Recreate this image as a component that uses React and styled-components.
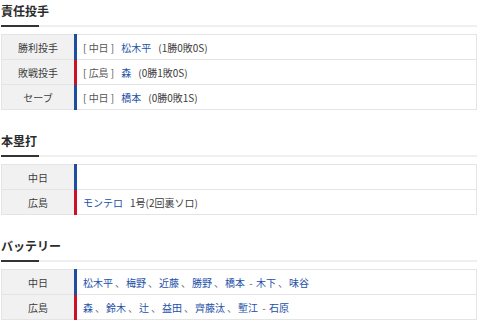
import React from 'react'
import styled, { createGlobalStyle } from 'styled-components'

const TEAM_COLOR = {
  中日: '#1d4f9e',
  広島: '#cc1126'
}

const GlobalStyle = createGlobalStyle`
  body {
    margin: 0;
    background: #fff;
    font-family: "Noto Sans CJK JP", "Noto Sans", sans-serif;
    color: #333;
  }
`

const Page = styled.div`
  padding: 0 3px 0 1px;
`

const Section = styled.section`
  margin-bottom: 20px;

  &:last-child {
    margin-bottom: 0;
  }
`

const Heading = styled.h2`
  position: relative;
  margin: 0;
  padding: 4px 0 7px;
  font-size: 12px;
  line-height: 14px;
  font-weight: bold;
  color: #2b2b2b;
  border-bottom: 2px solid #efefef;

  &::after {
    content: '';
    position: absolute;
    left: 0;
    bottom: -2px;
    width: 38px;
    height: 2px;
    background: #333;
  }
`

const Table = styled.table`
  width: 100%;
  margin-top: 7px;
  border-collapse: collapse;
  font-size: 10px;
`

const Row = styled.tr`
  height: 25px;
`

const Label = styled.th`
  width: 72px;
  padding: 0;
  font-weight: normal;
  text-align: center;
  color: #3c3c3c;
  background: #f1f1f1;
  border: 1px solid #e4e4e4;
`

const Value = styled.td`
  padding: 0 0 0 6px;
  text-align: left;
  color: #3c3c3c;
  border: 1px solid #e4e4e4;
  border-left: 3px solid ${(p) => p.color};
  white-space: nowrap;
`

const Team = styled.span`
  color: #555;
  margin-right: 7px;
`

const Name = styled.a`
  color: #2450a8;
  text-decoration: none;
  margin-right: ${(p) => (p.gap ? '7px' : '0')};
`

const Sep = styled.span`
  color: #666;
  margin: 0 1px 0 2px;
`

const pitchers = [
  { label: '勝利投手', team: '中日', name: '松木平', stat: '(1勝0敗0S)' },
  { label: '敗戦投手', team: '広島', name: '森', stat: '(0勝1敗0S)' },
  { label: 'セーブ', team: '中日', name: '橋本', stat: '(0勝0敗1S)' }
]

const battery = [
  {
    team: '中日',
    pitchers: ['松木平', '梅野', '近藤', '勝野', '橋本'],
    catchers: ['木下', '味谷']
  },
  {
    team: '広島',
    pitchers: ['森', '鈴木', '辻', '益田', '齊藤汰', '塹江'],
    catchers: ['石原']
  }
]

function NameList({ names }) {
  return names.map((n, i) => (
    <React.Fragment key={n}>
      {i > 0 && <Sep>、</Sep>}
      <Name href="#">{n}</Name>
    </React.Fragment>
  ))
}

export default function App() {
  return (
    <Page>
      <GlobalStyle />
      <Section>
        <Heading>責任投手</Heading>
        <Table>
          <tbody>
            {pitchers.map((p) => (
              <Row key={p.label}>
                <Label>{p.label}</Label>
                <Value color={TEAM_COLOR[p.team]}>
                  <Team>[ {p.team} ]</Team>
                  <Name href="#" gap>
                    {p.name}
                  </Name>
                  {p.stat}
                </Value>
              </Row>
            ))}
          </tbody>
        </Table>
      </Section>

      <Section>
        <Heading>本塁打</Heading>
        <Table>
          <tbody>
            <Row>
              <Label>中日</Label>
              <Value color={TEAM_COLOR['中日']} />
            </Row>
            <Row>
              <Label>広島</Label>
              <Value color={TEAM_COLOR['広島']}>
                <Name href="#" gap>
                  モンテロ
                </Name>
                1号(2回裏ソロ)
              </Value>
            </Row>
          </tbody>
        </Table>
      </Section>

      <Section>
        <Heading>バッテリー</Heading>
        <Table>
          <tbody>
            {battery.map((b) => (
              <Row key={b.team}>
                <Label>{b.team}</Label>
                <Value color={TEAM_COLOR[b.team]}>
                  <NameList names={b.pitchers} />
                  <Sep> - </Sep>
                  <NameList names={b.catchers} />
                </Value>
              </Row>
            ))}
          </tbody>
        </Table>
      </Section>
    </Page>
  )
}
